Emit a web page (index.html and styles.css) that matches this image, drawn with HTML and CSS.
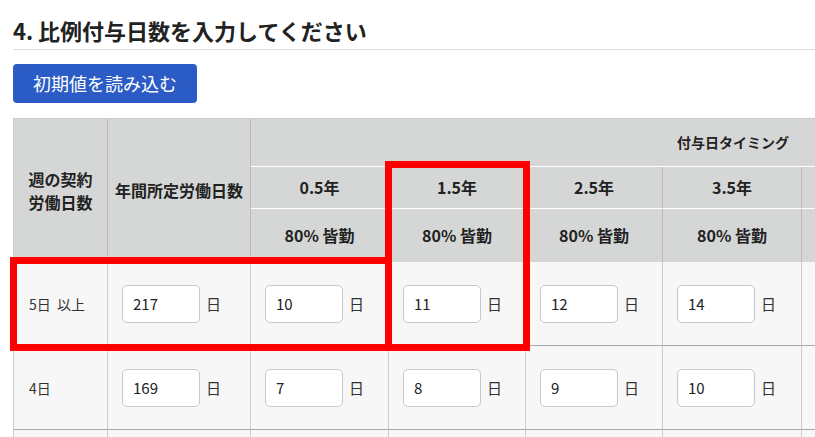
FILE: index.html
```html
<!DOCTYPE html>
<html lang="ja">
<head>
<meta charset="utf-8">
<title>比例付与日数</title>
<link rel="stylesheet" href="styles.css">
</head>
<body>
<div class="page">
  <h2 class="title">4. 比例付与日数を入力してください</h2>
  <button class="load-btn" type="button">初期値を読み込む</button>
  <div class="table-wrap">
    <table class="grant-table">
      <colgroup>
        <col class="c-week">
        <col class="c-annual">
        <col class="c-t">
        <col class="c-t1">
        <col class="c-t1">
        <col class="c-t2">
        <col class="c-t">
        <col class="c-t">
        <col class="c-t">
      </colgroup>
      <thead>
        <tr class="h1">
          <th rowspan="3">週の契約<br>労働日数</th>
          <th rowspan="3">年間所定労働日数</th>
          <th colspan="7" class="timing">付与日タイミング</th>
        </tr>
        <tr class="h2">
          <th class="year">0.5年</th>
          <th class="year">1.5年</th>
          <th class="year">2.5年</th>
          <th class="year">3.5年</th>
          <th class="year">4.5年</th>
          <th class="year">5.5年</th>
          <th class="year">6.5年以上</th>
        </tr>
        <tr class="h3">
          <th>80% 皆勤</th>
          <th>80% 皆勤</th>
          <th>80% 皆勤</th>
          <th>80% 皆勤</th>
          <th>80% 皆勤</th>
          <th>80% 皆勤</th>
          <th>80% 皆勤</th>
        </tr>
      </thead>
      <tbody>
        <tr>
          <td class="label">5日&nbsp;&nbsp;以上</td>
          <td><input class="num" type="text" value="217"><span class="unit">日</span></td>
          <td><input class="num" type="text" value="10"><span class="unit">日</span></td>
          <td><input class="num" type="text" value="11"><span class="unit">日</span></td>
          <td><input class="num" type="text" value="12"><span class="unit">日</span></td>
          <td><input class="num" type="text" value="14"><span class="unit">日</span></td>
          <td><input class="num" type="text" value="16"><span class="unit">日</span></td>
          <td><input class="num" type="text" value="18"><span class="unit">日</span></td>
          <td><input class="num" type="text" value="20"><span class="unit">日</span></td>
        </tr>
        <tr>
          <td class="label">4日</td>
          <td><input class="num" type="text" value="169"><span class="unit">日</span></td>
          <td><input class="num" type="text" value="7"><span class="unit">日</span></td>
          <td><input class="num" type="text" value="8"><span class="unit">日</span></td>
          <td><input class="num" type="text" value="9"><span class="unit">日</span></td>
          <td><input class="num" type="text" value="10"><span class="unit">日</span></td>
          <td><input class="num" type="text" value="12"><span class="unit">日</span></td>
          <td><input class="num" type="text" value="13"><span class="unit">日</span></td>
          <td><input class="num" type="text" value="15"><span class="unit">日</span></td>
        </tr>
        <tr>
          <td class="label">3日</td>
          <td><input class="num" type="text" value="121"><span class="unit">日</span></td>
          <td><input class="num" type="text" value="5"><span class="unit">日</span></td>
          <td><input class="num" type="text" value="6"><span class="unit">日</span></td>
          <td><input class="num" type="text" value="6"><span class="unit">日</span></td>
          <td><input class="num" type="text" value="8"><span class="unit">日</span></td>
          <td><input class="num" type="text" value="9"><span class="unit">日</span></td>
          <td><input class="num" type="text" value="10"><span class="unit">日</span></td>
          <td><input class="num" type="text" value="11"><span class="unit">日</span></td>
        </tr>
      </tbody>
    </table>
  </div>
  <div class="mark mark-row"></div>
  <div class="mark mark-col"></div>
</div>
</body>
</html>
```

FILE: styles.css
```css
html, body {
  margin: 0;
  padding: 0;
  background: #fff;
  overflow: hidden;
}

body {
  font-family: "Noto Sans CJK JP", "Noto Sans", sans-serif;
  color: #333;
}

.page {
  position: relative;
  padding-left: 13px;
  padding-top: 14px;
}

.title {
  margin: 0;
  padding: 0 0 2px;
  font-size: 22px;
  line-height: 33px;
  font-weight: bold;
  color: #222;
  border-bottom: 1px solid #dddddd;
}

.load-btn {
  display: block;
  margin-top: 14px;
  width: 184px;
  height: 39px;
  padding: 0;
  border: none;
  border-radius: 4px;
  background: #2b5cc6;
  color: #fff;
  font-family: "Noto Sans CJK JP", sans-serif;
  font-size: 18px;
  line-height: 39px;
}

.table-wrap {
  margin-top: 15px;
  overflow: hidden;
}

.grant-table {
  table-layout: fixed;
  width: 1203px;
  border-collapse: separate;
  border-spacing: 0;
  border-left: 1px solid #cccccc;
  border-top: 1px solid #cccccc;
}

.c-week { width: 94px; }
.c-annual { width: 143px; }
.c-t { width: 138px; }
.c-t1 { width: 137px; }
.c-t2 { width: 139px; }

.grant-table th {
  background: #d5d7d6;
  color: #222;
  font-size: 16px;
  font-weight: bold;
  line-height: 23px;
  text-align: center;
  padding: 0 4px;
  border-right: 1px solid #bbbbbb;
  white-space: nowrap;
}

.grant-table th.timing {
  font-size: 14px;
  border-bottom: 1px solid #ffffff;
}

.grant-table th.year {
  border-bottom: 1px solid #ffffff;
}

.h1 { height: 48px; }
.h2 { height: 42px; }
.h3 { height: 53px; }

.grant-table td {
  background: #f7f7f7;
  height: 83px;
  padding: 0 14px;
  border-right: 1px solid #cccccc;
  border-bottom: 1px solid #a8a8a8;
  white-space: nowrap;
  font-size: 15px;
  color: #333;
}

.grant-table td.label {
  padding-left: 15px;
  font-size: 14px;
}

.num {
  box-sizing: border-box;
  width: 78px;
  height: 38px;
  padding: 0 10px;
  border: 1px solid #c8c8c8;
  border-radius: 5px;
  background: #fff;
  font-family: "Noto Sans CJK JP", sans-serif;
  font-size: 15px;
  color: #222;
  vertical-align: middle;
}

.unit {
  margin-left: 6px;
  vertical-align: middle;
  color: #333;
}

.mark {
  position: absolute;
  box-sizing: border-box;
  border: 7px solid #ff0000;
}

.mark-row {
  left: 10px;
  top: 257px;
  width: 382px;
  height: 94px;
}

.mark-col {
  left: 385px;
  top: 161px;
  width: 145px;
  height: 190px;
}
```
